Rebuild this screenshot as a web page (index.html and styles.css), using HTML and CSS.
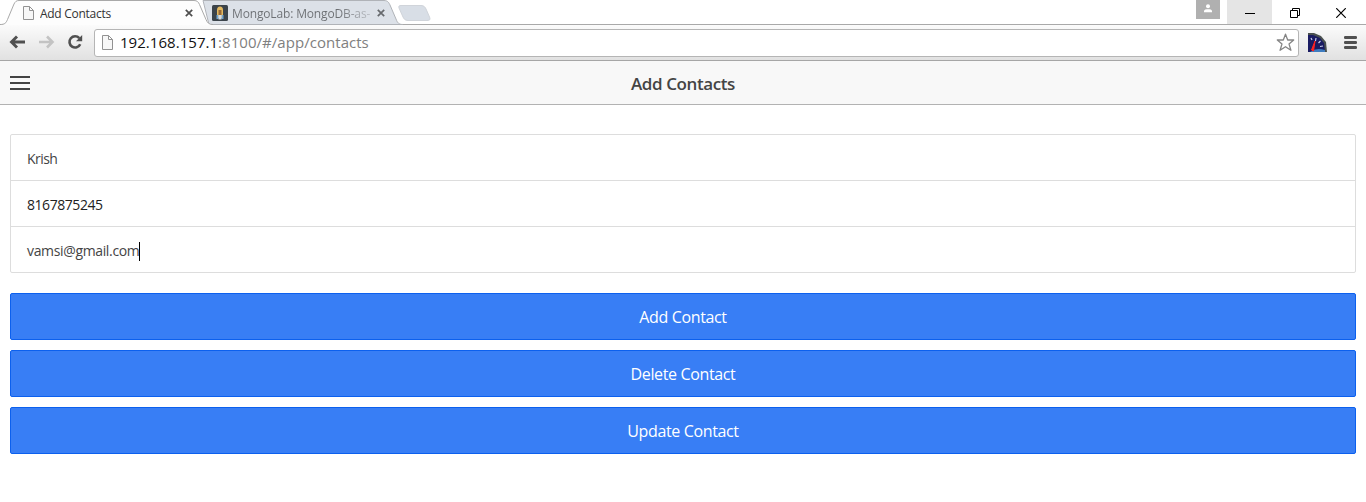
FILE: index.html
```html
<!DOCTYPE html>
<html lang="en">
<head>
<meta charset="utf-8">
<title>Add Contacts</title>
<link rel="stylesheet" href="styles.css">
</head>
<body>
<header class="tabstrip">
  <svg class="tab-shapes" width="440" height="25" viewBox="0 0 440 25">
    <path d="M203 .5H384C388 .5 389 3 390 5L396 19C397.500 23 399 24.500 403 24.500H209Z" fill="#dce1e8" stroke="#b0b3b8"/>
    <path d="M401 5.500H421C424 5.500 425 7 426 9L429.500 17C430.500 19.500 430 20.500 427 20.500H408C405 20.500 404 19 403 17L399 8C398.500 6 399 5.500 401 5.500Z" fill="#d8dee6" stroke="#d0d4da"/>
    <path d="M0 24.500C5 24.500 6 23 7.500 19.500L14 4C15.300 1.500 16.500 .5 19 .5H194C197 .5 198.500 2 199.500 4.500L206 19.500C207.500 23 209 24.500 213 24.500V26H0Z" fill="#fdfdfd"/>
    <path d="M0 24.500C5 24.500 6 23 7.500 19.500L14 4C15.300 1.500 16.500 .5 19 .5H194C197 .5 198.500 2 199.500 4.500L206 19.500C207.500 23 209 24.500 213 24.500" fill="none" stroke="#a9a9a9"/>
  </svg>
  <div class="tab tab-active">
    <svg class="page-icon" width="11" height="14" viewBox="0 0 11 14"><path d="M.5.5H6.500L10.500 4.500V13.500H.5ZM6.500 .5V4.500H10.500" fill="#f7f7f7" stroke="#929292"/></svg>
    <span class="tab-title">Add Contacts</span>
    <svg width="8" height="8" viewBox="0 0 8 8"><path d="M.8.8L7.200 7.200M7.200.8L.8 7.200" stroke="#4e4e4e" stroke-width="1.700"/></svg>
  </div>
  <div class="tab tab-idle">
    <svg width="16" height="16" viewBox="0 0 16 16"><rect width="16" height="16" rx="1.500" fill="#3c444b"/><path d="M5 13V5Q5 1.500 8 1.500T11 5V13Z" fill="#e4ba62"/><path d="M6.500 5H9.500V10H6.500Z" fill="#9a6a35"/><path d="M4.500 10H6.500V14H4.500ZM9.500 10H11.500V14H9.500Z" fill="#70a2cd"/><path d="M6.500 10H9.500V14.500H6.500Z" fill="#d7dde0"/></svg>
    <span class="tab-title">MongoLab: MongoDB-as-</span>
    <svg width="8" height="8" viewBox="0 0 8 8"><path d="M.8.8L7.200 7.200M7.200.8L.8 7.200" stroke="#66696d" stroke-width="1.700"/></svg>
  </div>
  <div class="window-controls">
    <div class="profile"><svg width="10" height="9" viewBox="0 0 10 9"><circle cx="5" cy="2.200" r="2" fill="#fff"/><path d="M1 8.200V7C1 5.600 3 5.200 5 5.200S9 5.600 9 7V8.200Z" fill="#fff"/></svg></div>
    <div class="control minimize"><svg width="10" height="10"><path d="M0 5.500H10" stroke="#000"/></svg></div>
    <div class="control restore"><svg width="10" height="10" viewBox="0 0 10 10"><path d="M.5 2.500H7.500V9.500H.5ZM2.500 2V.5H9.500V7.500H8" fill="none" stroke="#000"/></svg></div>
    <div class="control close"><svg width="10" height="10" viewBox="0 0 10 10"><path d="M.2.2L9.800 9.800M9.800.2L.2 9.800" stroke="#000" stroke-width="1.200"/></svg></div>
  </div>
</header>
<div class="toolbar">
  <svg class="back" width="16" height="14" viewBox="0 0 16 14"><path d="M16 7H3M8 1.500L2.500 7L8 12.500" fill="none" stroke="#505050" stroke-width="2.900"/></svg>
  <svg class="forward" width="16" height="14" viewBox="0 0 16 14"><path d="M0 7H13M8 1.500L13.500 7L8 12.500" fill="none" stroke="#c3c3c3" stroke-width="2.600"/></svg>
  <svg class="reload" width="16" height="16" viewBox="0 0 16 16"><path d="M12.300 4.200A5.600 5.600 0 1 0 13.200 10.200" fill="none" stroke="#505050" stroke-width="2.600"/><path d="M15.200 1V7.200H9Z" fill="#505050"/></svg>
  <div class="address">
    <svg class="page-icon" width="11" height="15" viewBox="0 0 11 15"><path d="M.5.5H6.500L10.500 4.500V14.500H.5ZM6.500 .5V4.500H10.500" fill="#f7f7f7" stroke="#929292"/></svg>
    <span class="url"><span class="host">192.168.157.1</span>:8100/#/app/contacts</span>
    <svg class="star" width="19" height="19" viewBox="0 0 19 19"><path d="M9.500 1.200L11.700 7H17.700L13 10.900L14.900 17.300L9.500 13.700L4.100 17.300L6 10.900L1.300 7H7.300Z" fill="#fff" stroke="#858585" stroke-width="1.300" stroke-linejoin="round"/></svg>
  </div>
  <svg class="gauge" width="19" height="19" viewBox="0 0 19 19"><path d="M0 0H6L13 3L18 9L19 19H0Z" fill="#49504f"/><path d="M0 2H5L12 5L16 10L17 19H0Z" fill="#191b62"/><path d="M2 19Q8 14 17 17V19Z" fill="#3e7cc0"/><path d="M3 5L4 7M8 5L7.500 8M12.500 8L10.500 10M15 13L12 13.500" stroke="#c9cdea" stroke-width="1.200"/><path d="M3.500 17L7 8L5.500 18Z" fill="#f22" stroke="#f22"/></svg>
  <svg class="menu" width="13" height="13" viewBox="0 0 13 13"><path d="M1.300 1.500H11.700M1.300 6.500H11.700M1.300 11.500H11.700" stroke="#505050" stroke-width="2.800" stroke-linecap="round"/></svg>
</div>
<nav class="app-bar">
  <svg class="hamburger" width="20" height="14" viewBox="0 0 20 14"><path d="M0 1H20M0 7H20M0 13H20" stroke="#444" stroke-width="2"/></svg>
  <h1 class="app-title"><span>Add Contacts</span></h1>
</nav>
<main class="content">
  <div class="list">
    <div class="item"><span class="name">Krish</span></div>
    <div class="item"><span class="phone">8167875245</span></div>
    <div class="item"><span class="email">vamsi@gmail.com</span><i class="caret"></i></div>
  </div>
  <div class="button"><span>Add Contact</span></div>
  <div class="button"><span>Delete Contact</span></div>
  <div class="button"><span>Update Contact</span></div>
</main>
</body>
</html>
```
FILE: styles.css
```css
* { box-sizing: border-box; }
body { margin: 0; height: 502px; overflow: hidden; background: #fff; font-family: "Open Sans", "Noto Sans", sans-serif; }
svg { display: block; flex: none; }
.tabstrip { position: relative; display: flex; height: 25px; border-bottom: 1px solid #a9a9a9; background: #fff; }
.tab-shapes { position: absolute; left: 0; top: 0; }
.tab { position: relative; display: flex; align-items: center; height: 25px; font-size: 12px; white-space: nowrap; }
.tab-active { width: 204px; padding: 1px 11px 0 23px; gap: 6px; color: #333; letter-spacing: -0.28px; }
.tab-idle { width: 195px; padding: 1px 14px 0 8px; gap: 4px; color: #74777b; letter-spacing: -0.15px; }
.tab-title { flex: 1; overflow: hidden; }
.tab-idle .tab-title { flex: none; width: 141px; background: linear-gradient(90deg, #6c6f73 75%, #c4c8ce); -webkit-background-clip: text; background-clip: text; color: transparent; }
.window-controls { display: flex; margin-left: auto; height: 24px; }
.profile { display: flex; justify-content: center; width: 24px; height: 19px; padding-top: 4px; margin-right: 7px; background: #b0b0b0; }
.control { display: flex; justify-content: center; align-items: center; width: 45px; height: 24px; padding-top: 2px; }
.minimize { background: #e5e5e5; }
.close { width: 49px; padding-right: 1px; }
.toolbar { display: flex; align-items: center; height: 36px; padding: 0 9px; border-bottom: 1px solid #a6a6a6; background: linear-gradient(#fbfbfb, #e1e1e1); }
.back, .forward, .reload, .menu { margin-bottom: 1px; }
.forward { margin-left: 14px; }
.reload { margin-left: 12px; }
.address { display: flex; align-items: center; flex: 1; height: 28px; margin: 0 9px 0 11px; padding: 0 3px 0 7px; border: 1px solid #b5b5b5; border-radius: 3px; background: #fff; }
.url { margin: 0 0 2px 7px; font-size: 15px; line-height: 22px; letter-spacing: 0.04px; color: #808080; }
.host { color: #111; }
.star { margin-left: auto; }
.menu { margin-left: 17px; }
.app-bar { display: grid; grid-template-columns: 20px 1fr 20px; align-items: center; height: 44px; padding: 0 10px; border-bottom: 1px solid #b2b2b2; background: #f8f8f8; }
.app-title { margin: 2px 0 0; text-align: center; font-size: 17px; line-height: 24px; font-weight: 600; letter-spacing: -0.4px; color: #444; }
.content { padding: 29px 10px 0; }
.list { margin-bottom: 20px; border: 1px solid #ddd; border-radius: 2px; }
.item { display: flex; align-items: center; height: 46px; padding: 3px 16px 0; border-bottom: 1px solid #ddd; font-size: 14px; line-height: 20px; letter-spacing: -0.35px; color: #444; }
.item:last-child { height: 45px; border-bottom: 0; }
.name { letter-spacing: -0.55px; }
.phone { letter-spacing: -0.45px; color: #222; }
.caret { width: 1px; height: 19px; background: #000; }
.button { display: flex; align-items: center; justify-content: center; height: 47px; margin-bottom: 10px; padding-top: 1px; border: 1px solid #0c60ee; border-radius: 2px; background: #387ef5; color: #fff; font-size: 16px; letter-spacing: -0.36px; }
```
